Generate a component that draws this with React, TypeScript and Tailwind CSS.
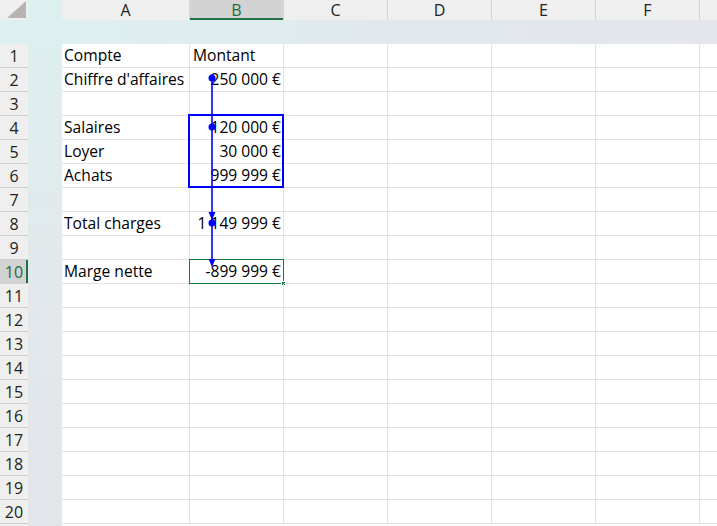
import React from "react";

const COLS = [
  { key: "A", w: "w-[128px]" },
  { key: "B", w: "w-[94px]" },
  { key: "C", w: "w-[104px]" },
  { key: "D", w: "w-[104px]" },
  { key: "E", w: "w-[104px]" },
  { key: "F", w: "w-[104px]" },
  { key: "G", w: "w-[104px]" },
];

const DATA: Record<number, [string, string]> = {
  1: ["Compte", "Montant"],
  2: ["Chiffre d'affaires", "250 000 €"],
  4: ["Salaires", "120 000 €"],
  5: ["Loyer", "30 000 €"],
  6: ["Achats", "999 999 €"],
  8: ["Total charges", "1 149 999 €"],
  10: ["Marge nette", "-899 999 €"],
};

const ROWS = Array.from({ length: 20 }, (_, i) => i + 1);
const SEL_ROW = 10;
const BLUE = "#0000ff";

// precedent arrows + range box
const TraceArrows = () => (
  <svg className="absolute top-0 left-0 pointer-events-none" width={717} height={526}>
    <rect x={189} y={115} width={94} height={72} fill="none" stroke={BLUE} strokeWidth={2} />
    <line x1={212} y1={78} x2={212} y2={262} stroke={BLUE} strokeWidth={1.6} />
    <circle cx={212} cy={78} r={3.5} fill={BLUE} />
    <circle cx={212} cy={127} r={3.5} fill={BLUE} />
    <circle cx={212} cy={223} r={3.5} fill={BLUE} />
    <polygon points="208.5,212 215.5,212 212,220" fill={BLUE} />
    <polygon points="208.5,259 215.5,259 212,267" fill={BLUE} />
  </svg>
);

export default function App() {
  return (
    <div className="relative w-[717px] h-[526px] overflow-hidden bg-white text-black font-['Open_Sans',sans-serif] text-[15.6px]">
      <div className="flex">
        {/* row headers */}
        <div className="flex flex-col w-[28px] shrink-0">
          <div className="h-[20px] bg-[#efefef] relative">
            <svg className="absolute top-0 left-0" width={28} height={20}>
              <polygon points="7,18 26,18 26,1" fill="#b4b4b4" />
            </svg>
          </div>
          <div className="h-[24px] bg-[#ddf0f0]" />
          {ROWS.map((r) => (
            <div
              key={r}
              className={`h-[24px] flex items-center justify-center border-b border-[#cfcfcf] text-[16px] leading-none pt-px ${
                r === SEL_ROW ? "bg-[#d3d3d3] text-[#1d6b3c] shadow-[inset_-2px_0_0_#217346]" : "bg-[#efefef] text-[#222]"
              }`}
            >
              {r}
            </div>
          ))}
          <div className="h-[2px] bg-[#efefef]" />
        </div>

        {/* ghost band */}
        <div className="w-[34px] shrink-0 h-[526px] bg-linear-to-b from-[#ddf0f0] via-[#e2e9ec] to-[#e2e5ea]" />

        {/* grid */}
        <div className="flex flex-col">
          <div className="flex h-[20px]">
            {COLS.map((c) => (
              <div
                key={c.key}
                className={`${c.w} shrink-0 flex items-center justify-center border-r border-[#d4d4d4] text-[16px] leading-none ${
                  c.key === "B" ? "bg-[#d3d3d3] text-[#1d6b3c] shadow-[inset_0_-2px_0_#217346]" : "bg-[#efefef] text-[#222]"
                }`}
              >
                {c.key === "G" ? "" : c.key}
              </div>
            ))}
          </div>
          <div className="h-[24px] bg-linear-to-r from-[#ddf0f0] via-[#e2e8ec] to-[#e4e5ea]" />
          {ROWS.map((r) => (
            <div key={r} className="flex h-[24px]">
              {COLS.map((c, ci) => {
                const val = DATA[r]?.[ci] ?? "";
                const numeric = /\d/.test(val);
                const selected = r === SEL_ROW && c.key === "B";
                return (
                  <div
                    key={c.key}
                    className={`${c.w} shrink-0 relative flex items-center pt-px border-r border-b border-[#e1e1e1] whitespace-nowrap ${
                      numeric ? "justify-end pr-[2px]" : ci === 1 ? "pl-[3px]" : "pl-[2px]"
                    }`}
                  >
                    {val}
                    {selected && (
                      <>
                        <div className="absolute -top-px -left-px right-[-1px] bottom-[-1px] border border-[#107c41]" />
                        <div className="absolute right-[-3px] bottom-[-3px] w-[5px] h-[5px] bg-[#107c41] border border-white" />
                      </>
                    )}
                  </div>
                );
              })}
            </div>
          ))}
        </div>
      </div>
      <TraceArrows />
    </div>
  );
}
